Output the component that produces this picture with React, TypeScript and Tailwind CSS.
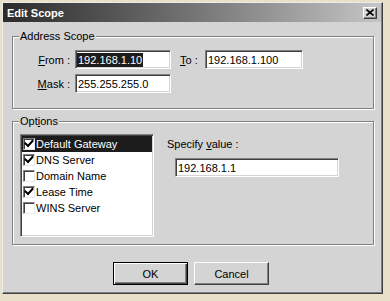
import React from "react";

function Field({ className, children }: { className: string; children?: React.ReactNode }) {
  return (
    <div
      className={`h-[19px] bg-white border border-t-[#808080] border-l-[#808080] border-r-white border-b-white shadow-[inset_1px_1px_0_#404040,inset_-1px_-1px_0_#d4d4d4] flex items-center pl-[1px] text-[11px] leading-[14px] text-black whitespace-nowrap overflow-hidden ${className}`}
    >
      {children}
    </div>
  );
}

function Check({ checked }: { checked: boolean }) {
  return (
    <div className="w-[12px] h-[12px] shrink-0 bg-white border border-t-[#808080] border-l-[#808080] border-r-[#e8e8e8] border-b-[#e8e8e8] shadow-[inset_1px_1px_0_#404040] flex items-center justify-center">
      {checked && (
        <svg width="10" height="10" viewBox="0 0 10 10">
          <polyline points="1.5,4.5 4,7 8.5,2" fill="none" stroke="#000" strokeWidth="2" strokeLinecap="square" />
        </svg>
      )}
    </div>
  );
}

const items = [
  { label: "Default Gateway", checked: true, selected: true },
  { label: "DNS Server", checked: true, selected: false },
  { label: "Domain Name", checked: false, selected: false },
  { label: "Lease Time", checked: true, selected: false },
  { label: "WINS Server", checked: false, selected: false },
];

export default function App() {
  return (
    <div className="w-[390px] h-[301px] bg-[#e8e1c7] pt-[2px] pl-[2px] font-['Liberation_Sans',Arial,sans-serif] text-[11px] text-black overflow-hidden">
      <div className="w-[381px] h-[292px] bg-[#d4d4d4] border border-t-[#ececec] border-l-[#ececec] border-r-[#404040] border-b-[#404040] shadow-[inset_-1px_-1px_0_#808080] flex flex-col">
        {/* Title bar */}
        <div className="h-[19px] mr-[1px] bg-linear-to-r from-[#2c2c2c] to-[#c6c6c6] flex items-center justify-between pl-[4px] pr-[4px]">
          <span className="text-white font-bold text-[11px] leading-[14px]">Edit Scope</span>
          <div className="w-[14px] h-[12px] bg-[#d4d4d4] border border-t-white border-l-white border-r-[#404040] border-b-[#404040] shadow-[inset_-1px_-1px_0_#808080] flex items-center justify-center">
            <svg width="8" height="7" viewBox="0 0 8 7">
              <path d="M0.5 0.5 L7.5 6.5 M7.5 0.5 L0.5 6.5" stroke="#000" strokeWidth="1.6" fill="none" />
            </svg>
          </div>
        </div>

        {/* Address Scope */}
        <div className="relative mt-[14px] ml-[9px] w-[362px] h-[73px] border border-[#808080] shadow-[1px_1px_0_#fff,inset_1px_1px_0_#fff]">
          <span className="absolute -top-[8px] left-[6px] bg-[#d4d4d4] px-[1px] leading-[14px]">Address Scope</span>
          <div className="flex items-center mt-[13px]">
            <span className="w-[57px] text-right leading-[14px]">
              <u>F</u>rom :
            </span>
            <Field className="ml-[5px] w-[96px]">
              <span className="bg-[#1c1c1c] text-white px-[1px] leading-[14px]">192.168.1.10</span>
            </Field>
            <span className="ml-[9px] w-[25px] leading-[14px]">
              <u>T</u>o :
            </span>
            <Field className="w-[98px] pl-[2px]">192.168.1.100</Field>
          </div>
          <div className="flex items-center mt-[5px]">
            <span className="w-[57px] text-right leading-[14px]">
              <u>M</u>ask :
            </span>
            <Field className="ml-[5px] w-[96px] pl-[2px]">255.255.255.0</Field>
          </div>
        </div>

        {/* Options */}
        <div className="relative mt-[12px] ml-[9px] w-[362px] h-[124px] border border-[#808080] shadow-[1px_1px_0_#fff,inset_1px_1px_0_#fff] flex">
          <span className="absolute -top-[8px] left-[6px] bg-[#d4d4d4] px-[1px] leading-[14px]">
            Opt<u>i</u>ons
          </span>
          <div className="mt-[12px] ml-[7px] w-[134px] h-[103px] bg-white border border-t-[#808080] border-l-[#808080] border-r-white border-b-white shadow-[inset_1px_1px_0_#404040,inset_-1px_-1px_0_#d4d4d4] pt-[1px] px-[1px]">
            {items.map((it) => (
              <div
                key={it.label}
                className={`h-[16px] flex items-center pl-[1px] ${it.selected ? "bg-[#1c1c1c] text-white" : "text-black"}`}
              >
                <Check checked={it.checked} />
                <span className="ml-[1px] leading-[14px] whitespace-nowrap">{it.label}</span>
              </div>
            ))}
          </div>
          <div className="ml-[13px] mt-[15px] flex flex-col">
            <span className="leading-[14px]">
              Specify <u>v</u>alue :
            </span>
            <Field className="mt-[7px] ml-[8px] w-[164px] pl-[2px]">192.168.1.1</Field>
          </div>
        </div>

        {/* Buttons */}
        <div className="flex mt-[17px] pl-[110px] gap-[6px]">
          <button className="w-[75px] h-[23px] bg-[#d4d4d4] border border-black shadow-[inset_1px_1px_0_#fff,inset_-1px_-1px_0_#404040,inset_-2px_-2px_0_#808080] flex items-center justify-center text-[11px] leading-[14px]">
            OK
          </button>
          <button className="w-[75px] h-[23px] bg-[#d4d4d4] border border-t-white border-l-white border-r-[#404040] border-b-[#404040] shadow-[inset_-1px_-1px_0_#808080] flex items-center justify-center text-[11px] leading-[14px]">
            Cancel
          </button>
        </div>
      </div>
    </div>
  );
}
